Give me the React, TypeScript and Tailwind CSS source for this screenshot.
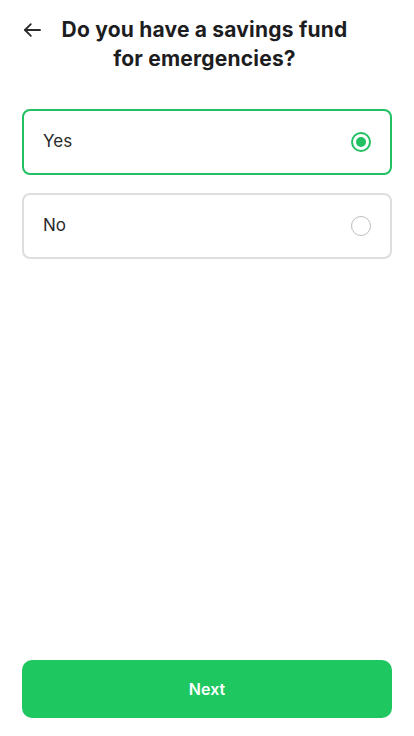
import { useState } from 'react'

const options = ['Yes', 'No']

export default function App() {
  const [selected, setSelected] = useState('Yes')

  return (
    <div
      className="w-[414px] h-[736px] bg-white flex flex-col px-[22px] text-[#1d1d1f]"
      style={{ fontFamily: 'Inter, "Noto Sans", sans-serif' }}
    >
      <header className="relative pt-[15px] pb-[36px]">
        <button aria-label="Back" className="absolute left-0 top-[20px] text-[#2b2b2b]">
          <svg width="21" height="20" viewBox="0 0 24 24" fill="none" stroke="currentColor" strokeWidth="2.2" strokeLinecap="round" strokeLinejoin="round">
            <path d="M21 12H3" />
            <path d="M10 5l-7 7 7 7" />
          </svg>
        </button>
        <h1 className="text-center text-[21px] leading-[29px] font-bold tracking-[0.2px] pr-[5px]">
          Do you have a savings fund
          <br />
          for emergencies?
        </h1>
      </header>

      <div className="flex flex-col gap-[18px]">
        {options.map(o => {
          const active = selected === o
          return (
            <button
              key={o}
              onClick={() => setSelected(o)}
              className={`h-[66px] w-full flex items-center justify-between pl-[19px] pr-[19px] rounded-[8px] border-2 text-left text-[17px] ${active ? 'border-[#22c063]' : 'border-[#dedede]'}`}
            >
              <span className="text-[#2a2a2a]">{o}</span>
              {active ? (
                <span className="w-[20px] h-[20px] rounded-full border-2 border-[#22c063] flex items-center justify-center">
                  <span className="w-[10px] h-[10px] rounded-full bg-[#22c063]" />
                </span>
              ) : (
                <span className="w-[20px] h-[20px] rounded-full border border-[#bdbdbd]" />
              )}
            </button>
          )
        })}
      </div>

      <div className="flex-1" />

      <button className="mb-[18px] h-[58px] w-full rounded-[10px] bg-[#1ec75f] text-white text-[16px] font-semibold">
        Next
      </button>
    </div>
  )
}
